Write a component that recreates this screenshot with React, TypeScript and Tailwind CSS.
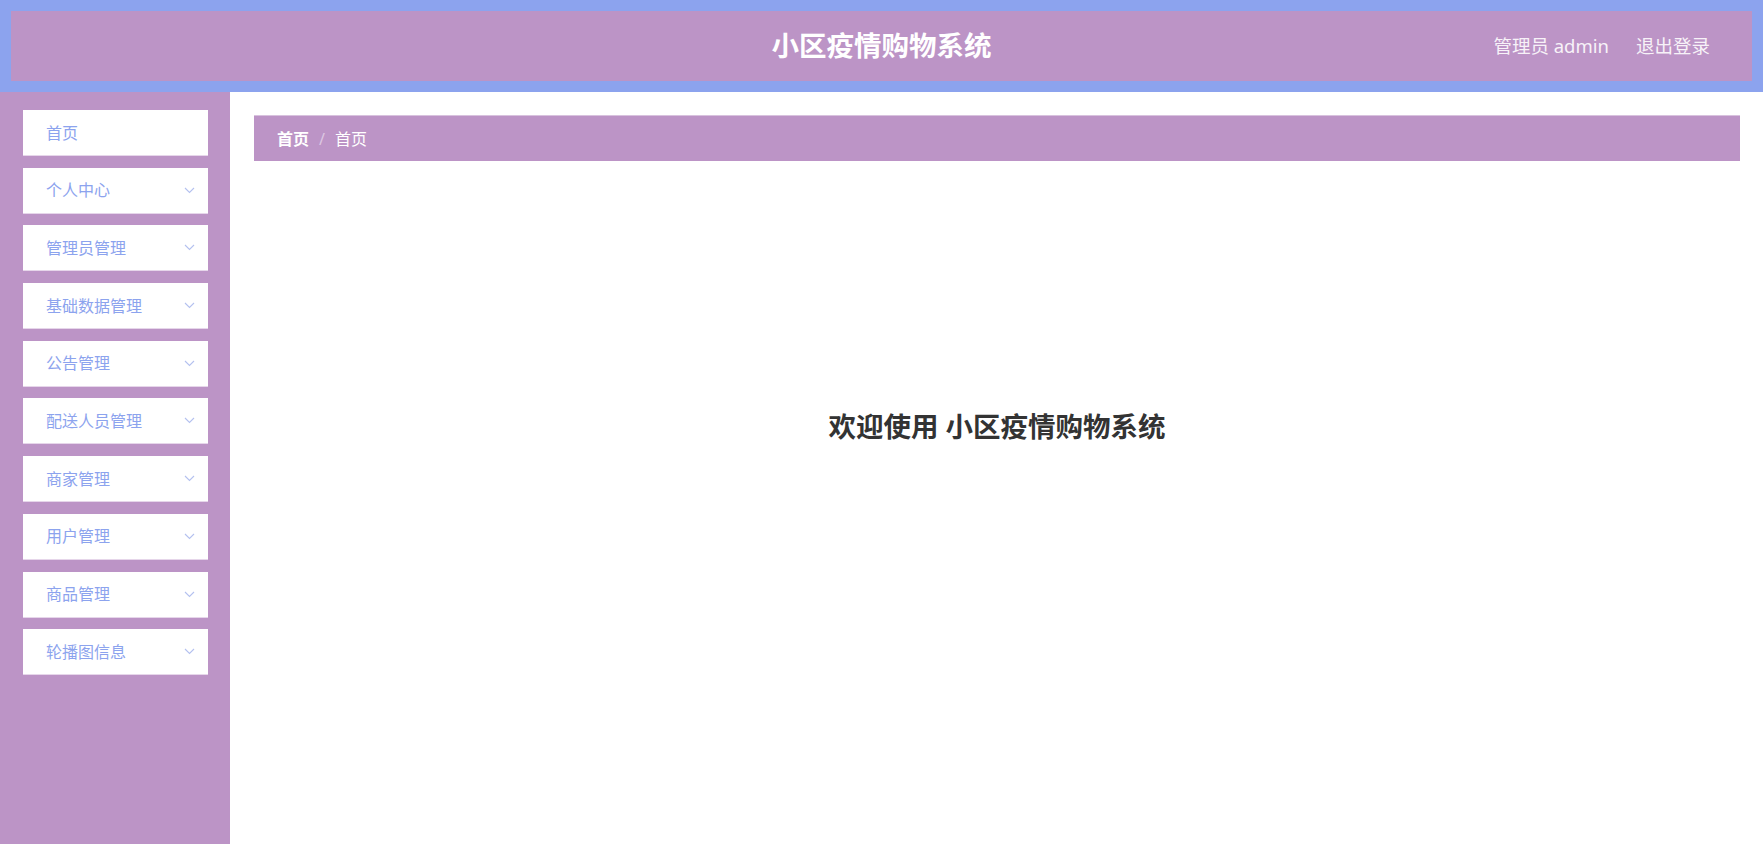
import React from "react";

const menu = [
  { label: "首页", sub: false },
  { label: "个人中心", sub: true },
  { label: "管理员管理", sub: true },
  { label: "基础数据管理", sub: true },
  { label: "公告管理", sub: true },
  { label: "配送人员管理", sub: true },
  { label: "商家管理", sub: true },
  { label: "用户管理", sub: true },
  { label: "商品管理", sub: true },
  { label: "轮播图信息", sub: true },
];

function Chevron() {
  return (
    <svg width="11" height="7" viewBox="0 0 11 7" fill="none" className="shrink-0">
      <path d="M1 1l4.5 4.5L10 1" stroke="#b4c1ef" strokeWidth="1.1" />
    </svg>
  );
}

export default function App() {
  return (
    <div
      className="flex h-[844px] w-full flex-col overflow-hidden bg-white"
      style={{ fontFamily: '"Noto Sans", "Noto Sans CJK SC", sans-serif' }}
    >
      <header className="grid h-[92px] shrink-0 grid-cols-[1fr_auto_1fr] items-center border-[11px] border-[#8ca3ee] bg-[#bc94c6]">
        <div />
        <h1 className="text-[27.5px] font-bold leading-none text-white">小区疫情购物系统</h1>
        <div className="flex items-center justify-end gap-[27px] pr-[42px] text-[18.5px] text-[#f7f2f8]">
          <span>管理员 admin</span>
          <span>退出登录</span>
        </div>
      </header>

      <div className="flex min-h-0 flex-1">
        <aside className="flex w-[230px] shrink-0 flex-col gap-[11.7px] bg-[#bc94c6] pl-[23px] pr-[22px] pt-[18px]">
          {menu.map((m) => (
            <div
              key={m.label}
              className="flex h-[46px] items-center justify-between border-b border-[#e6d6ea] bg-white pl-[23px] pr-[13px]"
            >
              <span className="text-[16px] text-[#8ca3ee]">{m.label}</span>
              {m.sub && <Chevron />}
            </div>
          ))}
        </aside>

        <main className="flex min-w-0 flex-1 flex-col pl-[24px] pr-[23px] pt-[23px]">
          <nav className="flex h-[46px] items-center border-t border-[#d8c2de] bg-[#bc94c6] pl-[23px] text-[16px] text-white">
            <span className="font-bold">首页</span>
            <span className="mx-[10px] text-[#dcc7e2]">/</span>
            <span>首页</span>
          </nav>
          <div className="mt-[246px] flex justify-center">
            <h2 className="text-[27.5px] font-bold leading-[40px] text-[#333333]">
              欢迎使用 小区疫情购物系统
            </h2>
          </div>
        </main>
      </div>
    </div>
  );
}
